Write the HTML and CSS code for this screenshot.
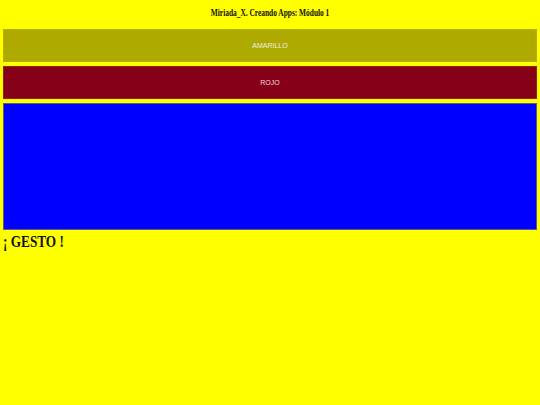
FILE: index.html
```html
<!DOCTYPE html>
<html lang="es">
<head>
<meta charset="utf-8">
<title>Miriada_X</title>
<link rel="stylesheet" href="styles.css">
</head>
<body>
<div class="app">
  <div class="title"><span class="squeeze">Miriada_X. Creando Apps: Módulo 1</span></div>
  <div class="btn btn-yellow">AMARILLO</div>
  <div class="btn btn-red">ROJO</div>
  <div class="canvas"></div>
  <div class="gesture"><span class="squeeze-left">¡ GESTO !</span></div>
</div>
</body>
</html>
```
FILE: styles.css
```css
html, body {
  margin: 0;
  padding: 0;
  background: #ffff00;
  width: 540px;
  height: 405px;
  overflow: hidden;
}
.app {
  display: flex;
  flex-direction: column;
  padding: 0 3px;
  font-family: "Liberation Serif", serif;
}
.title {
  height: 25px;
  display: flex;
  align-items: center;
  justify-content: center;
  font-weight: bold;
  font-size: 10px;
  color: #111;
  margin-bottom: 4px;
}
.squeeze {
  display: inline-block;
  transform: scaleX(0.74);
  white-space: nowrap;
}
.btn {
  height: 31px;
  display: flex;
  align-items: center;
  justify-content: center;
  font-family: "Liberation Sans", sans-serif;
  font-size: 7px;
  color: #eee;
  margin-bottom: 4px;
}
.btn-yellow {
  background: #aeaa00;
  border: 1px solid #b4b000;
}
.btn-red {
  background: #860017;
  border: 1px solid #9a2010;
  color: #f2dada;
}
.canvas {
  height: 125px;
  background: #0000ff;
  border: 1px solid #5a5a8a;
}
.gesture {
  font-weight: bold;
  font-size: 17px;
  color: #111;
  margin-top: 2px;
  line-height: 19px;
}
.squeeze-left {
  display: inline-block;
  transform: scaleX(0.78);
  transform-origin: left center;
  white-space: nowrap;
}
```
